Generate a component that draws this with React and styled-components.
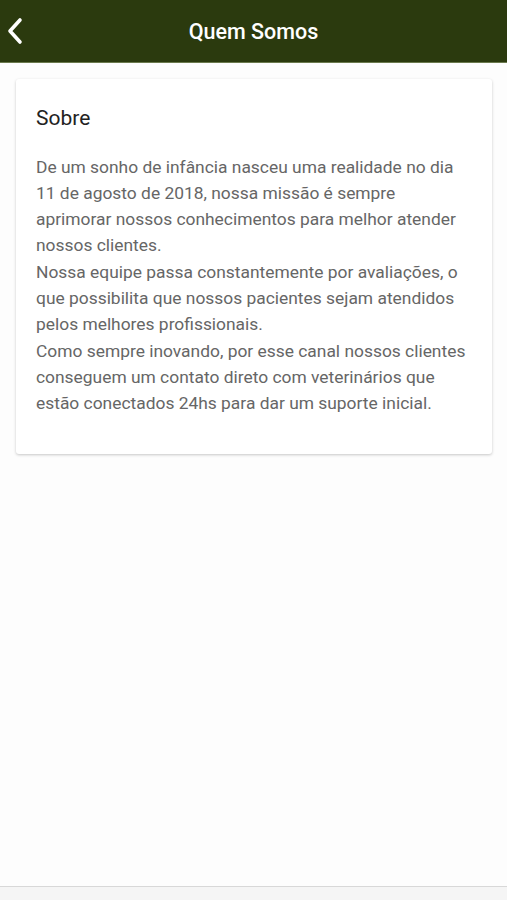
import React from "react";
import styled, { createGlobalStyle } from "styled-components";

const Global = createGlobalStyle`
  html, body {
    margin: 0;
    padding: 0;
    background: #fdfdfd;
  }
  body {
    font-family: Roboto, "Liberation Sans", sans-serif;
  }
`;

const paragraphs = [
  "De um sonho de infância nasceu uma realidade no dia 11 de agosto de 2018, nossa missão é sempre aprimorar nossos conhecimentos para melhor atender nossos clientes.",
  "Nossa equipe passa constantemente por avaliações, o que possibilita que nossos pacientes sejam atendidos pelos melhores profissionais.",
  "Como sempre inovando, por esse canal nossos clientes conseguem um contato direto com veterinários que estão conectados 24hs para dar um suporte inicial.",
];

export default function App() {
  return (
    <>
      <Global />
      <Screen>
        <Header>
          <BackButton aria-label="Voltar">
            <svg width="18" height="28" viewBox="0 0 18 28" fill="none">
              <path
                d="M14 3 L4 14 L14 25"
                stroke="#fff"
                strokeWidth="3.6"
                strokeLinecap="round"
                strokeLinejoin="round"
              />
            </svg>
          </BackButton>
          <Title>Quem Somos</Title>
        </Header>
        <Content>
          <Card>
            <CardTitle>Sobre</CardTitle>
            {paragraphs.map((p, i) => (
              <Text key={i}>{p}</Text>
            ))}
          </Card>
        </Content>
        <TabBar />
      </Screen>
    </>
  );
}

const Screen = styled.div`
  height: 900px;
  display: flex;
  flex-direction: column;
  background: #fdfdfd;
`;

const Header = styled.header`
  position: relative;
  height: 62px;
  flex-shrink: 0;
  background: #2b3a0e;
  border-bottom: 1px solid #6b7a4e;
  display: flex;
  align-items: center;
  justify-content: center;
`;

const BackButton = styled.button`
  position: absolute;
  left: 6px;
  top: 17px;
  background: none;
  border: none;
  padding: 0;
  cursor: pointer;
  display: flex;
`;

const Title = styled.h1`
  margin: 0;
  color: #fff;
  font-size: 21.5px;
  font-weight: 500;
`;

const Content = styled.main`
  flex: 1;
  padding: 16px 15px 0 16px;
`;

const Card = styled.section`
  background: #fff;
  border-radius: 3px;
  box-shadow: 0 1px 3px rgba(0, 0, 0, 0.22);
  padding: 27px 20px 37px 20px;
`;

const CardTitle = styled.h2`
  margin: 0 0 24px;
  font-size: 21px;
  font-weight: 400;
  color: #222;
`;

const Text = styled.p`
  margin: 0 0 1px;
  font-size: 17.4px;
  line-height: 26px;
  color: #666;
`;

const TabBar = styled.footer`
  height: 13px;
  flex-shrink: 0;
  background: #f5f5f5;
  border-top: 1px solid #d8d8d8;
`;
